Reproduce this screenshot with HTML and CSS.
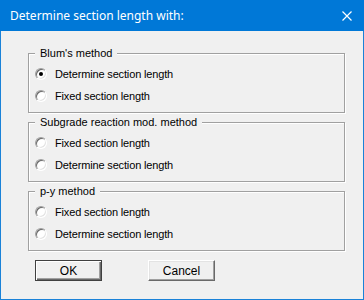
FILE: index.html
```html
<!DOCTYPE html>
<html lang="en">
<head>
<meta charset="UTF-8">
<title>Determine section length with:</title>
<link rel="stylesheet" href="styles.css">
</head>
<body>

<div class="window">
  <div class="titlebar">
    <span class="title">Determine section length with:</span>
    <svg class="close" width="10" height="10" viewBox="0 0 10 10">
      <path d="M0.5 0.5 L9.5 9.5 M9.5 0.5 L0.5 9.5" stroke="#fff" stroke-width="1.2" fill="none"/>
    </svg>
  </div>

  <div class="content">
    <div class="group">
      <span class="group-title">Blum's method</span>
      <div class="option"><span class="radio checked"></span>Determine section length</div>
      <div class="option"><span class="radio"></span>Fixed section length</div>
    </div>

    <div class="group">
      <span class="group-title">Subgrade reaction mod. method</span>
      <div class="option"><span class="radio"></span>Fixed section length</div>
      <div class="option"><span class="radio"></span>Determine section length</div>
    </div>

    <div class="group">
      <span class="group-title">p-y method</span>
      <div class="option"><span class="radio"></span>Fixed section length</div>
      <div class="option"><span class="radio"></span>Determine section length</div>
    </div>

    <div class="buttons">
      <button class="btn default">OK</button>
      <button class="btn">Cancel</button>
    </div>
  </div>
</div>

</body>
</html>
```

FILE: styles.css
```css
body {
  margin: 0;
  background: #f0f0f0;
}

.window {
  width: 364px;
  height: 300px;
  box-sizing: border-box;
  border: 1px solid #1a82d8;
  border-top: none;
  background: #f0f0f0;
  font-family: "Liberation Sans", Arial, sans-serif;
  font-size: 11px;
  color: #000;
}

.titlebar {
  height: 31px;
  margin: 0 -1px;
  background: #0078d7;
  display: flex;
  align-items: center;
  justify-content: space-between;
  padding: 0 12px 0 10px;
}

.title {
  font-family: "Noto Sans", "Open Sans", sans-serif;
  font-size: 12px;
  color: #fff;
  margin-top: -1px;
}

.close {
  display: block;
}

.content {
  padding: 22px 0 0 27px;
}

.group {
  width: 317px;
  height: 60px;
  box-sizing: border-box;
  border: 1px solid #a0a0a0;
  box-shadow: 1px 1px 0 #fff, inset 1px 1px 0 #fff;
  padding: 0 6px;
  margin-bottom: 9px;
}

.group-title {
  display: block;
  width: max-content;
  margin-top: -7px;
  padding: 0 5px;
  line-height: 13px;
  height: 13px;
  background: #f0f0f0;
}

.group .option:first-of-type {
  margin-top: 3px;
}

.option {
  display: flex;
  align-items: center;
  height: 22px;
  letter-spacing: -0.15px;
}

.radio {
  width: 12px;
  height: 12px;
  box-sizing: border-box;
  border-radius: 50%;
  border: 1px solid;
  border-color: #a0a0a0 #ffffff #ffffff #a0a0a0;
  background: #fff;
  box-shadow: inset 1px 1px 0 #696969, inset -1px -1px 0 #e3e3e3;
  margin-right: 8px;
  display: flex;
  align-items: center;
  justify-content: center;
}

.radio.checked::after {
  content: "";
  width: 4px;
  height: 4px;
  border-radius: 50%;
  background: #000;
}

.buttons {
  display: flex;
  gap: 46px;
  margin-top: 3px;
  padding-left: 7px;
}

.btn {
  width: 67px;
  height: 21px;
  box-sizing: border-box;
  font-family: "Liberation Sans", Arial, sans-serif;
  font-size: 12px;
  color: #000;
  background: #f0f0f0;
  border: 1px solid;
  border-color: #fff #696969 #696969 #fff;
  box-shadow: inset -1px -1px 0 #a0a0a0, inset 1px 1px 0 #e3e3e3;
  padding: 0;
}

.btn.default {
  border: 1px solid #404040;
  box-shadow: inset 1px 1px 0 #fff, inset -1px -1px 0 #696969, inset -2px -2px 0 #a0a0a0;
}
```
